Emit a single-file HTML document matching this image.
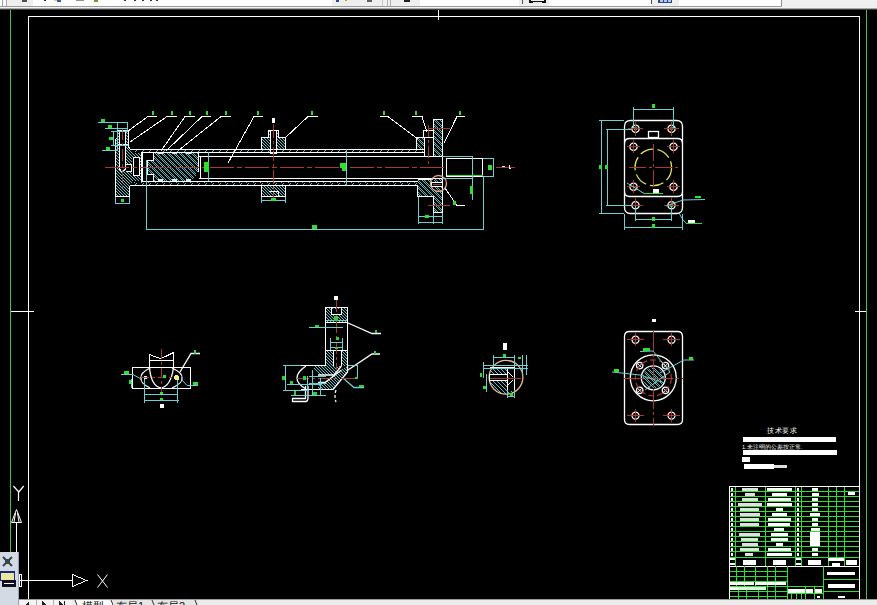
<!DOCTYPE html>
<html><head><meta charset="utf-8">
<style>
html,body{margin:0;padding:0;width:877px;height:605px;overflow:hidden;background:#000;}
svg{position:absolute;left:0;top:0;display:block;}
text{font-family:"Liberation Sans",sans-serif;}
</style></head>
<body>
<svg width="877" height="605" viewBox="0 0 877 605" shape-rendering="crispEdges">
<rect x="0" y="0" width="877" height="605" fill="#000"/>
<defs>
<pattern id="h3" width="3" height="3" patternUnits="userSpaceOnUse">
<rect x="0" y="0" width="1" height="1" fill="#58c8cc"/><rect x="1" y="1" width="1" height="1" fill="#58c8cc"/><rect x="2" y="2" width="1" height="1" fill="#58c8cc"/>
</pattern>
<pattern id="h4" width="4" height="4" patternUnits="userSpaceOnUse">
<rect x="0" y="0" width="1" height="1" fill="#58c8cc"/><rect x="1" y="1" width="1" height="1" fill="#58c8cc"/><rect x="2" y="2" width="1" height="1" fill="#58c8cc"/><rect x="3" y="3" width="1" height="1" fill="#58c8cc"/>
</pattern>
<pattern id="xh" width="6" height="6" patternUnits="userSpaceOnUse"><rect x="2" y="0" width="1" height="1" fill="#58c0c4"/><rect x="4" y="0" width="1" height="1" fill="#58c0c4"/><rect x="3" y="1" width="1" height="1" fill="#58c0c4"/><rect x="5" y="1" width="1" height="1" fill="#58c0c4"/><rect x="0" y="2" width="1" height="1" fill="#58c0c4"/><rect x="4" y="2" width="1" height="1" fill="#58c0c4"/><rect x="1" y="3" width="1" height="1" fill="#58c0c4"/><rect x="5" y="3" width="1" height="1" fill="#58c0c4"/><rect x="0" y="4" width="1" height="1" fill="#58c0c4"/><rect x="2" y="4" width="1" height="1" fill="#58c0c4"/><rect x="1" y="5" width="1" height="1" fill="#58c0c4"/><rect x="3" y="5" width="1" height="1" fill="#58c0c4"/></pattern>
<pattern id="t7" width="7" height="3" patternUnits="userSpaceOnUse" x="1" y="0">
<rect x="2" y="0" width="1" height="1" fill="#58c8cc"/><rect x="1" y="1" width="1" height="1" fill="#58c8cc"/><rect x="0" y="2" width="1" height="1" fill="#58c8cc"/>
</pattern>
</defs>

<!-- top toolbar strip -->
<g id="toolbar">
<rect x="0" y="0" width="877" height="9" fill="#efefef"/>
<rect x="0" y="0" width="2" height="6" fill="#fdfdfd"/>
<rect x="2" y="0" width="1" height="6" fill="#a0a0a0"/>
<rect x="3" y="0" width="3" height="6" fill="#f8f8f8"/>
<rect x="6" y="0" width="1" height="6" fill="#a8a8a8"/>
<rect x="33" y="0" width="299" height="6" fill="#fefefe"/>
<rect x="420" y="0" width="99" height="6" fill="#fefefe"/>
<rect x="522" y="0" width="1" height="4" fill="#505050"/>
<rect x="549" y="0" width="102" height="6" fill="#fefefe"/>
<rect x="651" y="0" width="1" height="4" fill="#505050"/>
<rect x="679" y="0" width="102" height="6" fill="#fefefe"/>
<rect x="781" y="0" width="1" height="7" fill="#909090"/>
<rect x="382" y="0" width="1" height="6" fill="#c8c8c8"/>
<rect x="387" y="0" width="1" height="6" fill="#b0b0b0"/>
<rect x="390" y="0" width="1" height="6" fill="#b0b0b0"/>
<rect x="0" y="6" width="782" height="1" fill="#9a9a9a"/>
<rect x="0" y="7" width="877" height="1" fill="#f4f4f4"/>
<rect x="0" y="8" width="877" height="1" fill="#a8a8a8"/>
<rect x="0" y="9" width="877" height="1" fill="#404040"/>
<!-- icon bits -->
<rect x="22" y="0" width="5" height="2" fill="#505050"/>
<rect x="44" y="0" width="2" height="1" fill="#202020"/>
<rect x="54" y="0" width="3" height="1" fill="#d8d060"/><rect x="57" y="0" width="4" height="2" fill="#2a60b0"/>
<rect x="76" y="0" width="8" height="1" fill="#909090"/>
<rect x="94" y="0" width="4" height="2" fill="#909020"/>
<rect x="124" y="0" width="2" height="1" fill="#303030"/><rect x="134" y="0" width="2" height="1" fill="#303030"/><rect x="142" y="0" width="2" height="1" fill="#303030"/><rect x="150" y="0" width="2" height="1" fill="#303030"/><rect x="156" y="0" width="2" height="1" fill="#303030"/>
<rect x="336" y="0" width="3" height="2" fill="#2a4a90"/><rect x="345" y="0" width="2" height="1" fill="#b0b020"/>
<rect x="367" y="0" width="5" height="2" fill="#606060"/>
<rect x="404" y="0" width="6" height="2" fill="#202020"/>
<rect x="529" y="0" width="17" height="3" fill="#101010"/><rect x="531" y="0" width="13" height="1" fill="#f0f0f0"/><rect x="533" y="2" width="9" height="1" fill="#e8e8e8"/>
<rect x="658" y="0" width="14" height="3" fill="#2a4a8a"/><rect x="660" y="0" width="3" height="2" fill="#b0c8e8"/><rect x="664" y="0" width="3" height="2" fill="#b0c8e8"/><rect x="668" y="0" width="3" height="2" fill="#b0c8e8"/>
</g>
<!-- window green lines -->
<rect x="10" y="10" width="1" height="590" fill="#4cc04c"/>
<rect x="866" y="10" width="1" height="590" fill="#4cc04c"/>
<!-- frame -->
<g fill="none" stroke="#fff" stroke-width="1">
<path d="M28.5 600 L28.5 16.5 L859.5 16.5 L859.5 600"/>
</g>
<!-- MAIN CYLINDER -->
<g id="cyl">
<!-- hatched tube walls -->
<rect x="130" y="150" width="293" height="2" fill="url(#t7)"/>
<rect x="130" y="182" width="288" height="3" fill="url(#t7)"/>
<!-- left end cap hatched -->
<path d="M116 138 L129 138 L129 150 L133 153 L143 153 L143 181 L133 181 L129 185 L129 196 L116 196 Z" fill="url(#h3)"/>
<rect x="118" y="131" width="10" height="14" fill="url(#h3)"/>
<!-- black recesses in cap -->
<rect x="120" y="131" width="5" height="38" fill="#000"/>
<path d="M120 169 L122 172 L125 169 Z" fill="#000"/>
<rect x="125" y="164" width="7" height="7" fill="#000"/>
<rect x="132" y="157" width="8" height="19" fill="#000"/>
<!-- piston crosshatch -->
<path d="M154 152 L198 152 L198 172 L192 181 L154 181 L154 175 L147 175 L147 160 L154 160 Z" fill="url(#xh)"/>
<g fill="#e8e8e8"><rect x="158" y="152" width="5" height="2"/><rect x="172" y="152" width="5" height="2"/><rect x="186" y="152" width="5" height="2"/><rect x="158" y="179" width="5" height="2"/><rect x="172" y="179" width="5" height="2"/><rect x="186" y="179" width="5" height="2"/></g>
<!-- port bosses hatched -->
<rect x="262" y="138" width="23" height="11" fill="url(#h3)"/>
<rect x="262" y="185" width="23" height="11" fill="url(#h3)"/>
<rect x="269" y="131" width="10" height="7" fill="url(#h3)"/>
<rect x="271" y="131" width="5" height="22" fill="#000"/>
<!-- right flange and gland hatched -->
<rect x="434" y="120" width="9" height="36" fill="url(#xh)"/><rect x="434" y="179" width="9" height="34" fill="url(#xh)"/>
<rect x="417" y="138" width="8" height="12" fill="url(#xh)"/>
<path d="M418 180 L442 180 L442 196 L418 196 Z" fill="url(#xh)"/>
<g fill="none" stroke="#fff" stroke-width="1">
<!-- tube lines -->
<line x1="130" y1="149.5" x2="424" y2="149.5"/>
<line x1="143" y1="152.5" x2="424" y2="152.5"/>
<line x1="199" y1="156.5" x2="442" y2="156.5"/>
<line x1="199" y1="178.5" x2="442" y2="178.5"/>
<line x1="143" y1="181.5" x2="418" y2="181.5"/>
<line x1="130" y1="185.5" x2="418" y2="185.5"/>
<!-- end cap outline -->
<path d="M115.5 138.5 L117.5 138.5 L117.5 130.5 L128.5 130.5 L128.5 145.5 L129.5 149.5 M115.5 138.5 L115.5 196.5 L129.5 196.5 L129.5 185.5"/>
<path d="M119.5 131 L119.5 169 L122 172 L125.5 169 L125.5 131"/>
<path d="M125.5 164.5 L131.5 164.5 L131.5 171.5 L125.5 171.5"/>
<path d="M133.5 157.5 L139.5 157.5 L139.5 175.5 L133.5 175.5 Z"/>
<line x1="141.5" y1="152" x2="141.5" y2="182"/>
<line x1="142.5" y1="152" x2="142.5" y2="182"/>
<line x1="117.5" y1="144.5" x2="128.5" y2="144.5"/>
<!-- piston outline -->
<path d="M153.5 152.5 L153.5 160.5 L147.5 160.5 L147.5 174.5 L153.5 174.5 L153.5 181"/>
<line x1="198.5" y1="152" x2="198.5" y2="172"/>
<line x1="200.5" y1="156" x2="200.5" y2="178"/>
<!-- port bosses -->
<path d="M261.5 149 L261.5 137.5 L268.5 137.5 L268.5 130.5 L278.5 130.5 L278.5 137.5 L285.5 137.5 L285.5 149"/>
<path d="M270.5 131 L270.5 153.5 L276.5 153.5 L276.5 131"/>
<path d="M261.5 186 L261.5 196.5 L285.5 196.5 L285.5 186"/>
<path d="M268.5 191.5 L278.5 191.5 L278.5 196"/>
<!-- right gland/flange -->
<path d="M433.5 156 L433.5 119.5 L442.5 119.5 L442.5 212.5 L433.5 212.5 L433.5 196"/>
<path d="M416.5 149 L416.5 137.5 L424.5 137.5 L424.5 156"/>
<rect x="423.5" y="130.5" width="10" height="7"/>
<path d="M417.5 186 L417.5 196.5 L433.5 196.5"/>
<line x1="418" y1="179.5" x2="433" y2="179.5"/>
<!-- rod end -->
<rect x="446.5" y="158.5" width="36" height="18"/>
<!-- leaders -->
<path d="M157 116.5 L148 116.5 L128 131"/>
<path d="M177 116.5 L167 116.5 L130 142"/>
<path d="M195 116.5 L185 116.5 L161 151"/>
<path d="M211 116.5 L202 116.5 L166 151"/>
<path d="M231 116.5 L221 116.5 L179 150"/>
<path d="M263 116.5 L254 116.5 L228 163"/>
<path d="M318 116.5 L308 116.5 L285 138"/>
<path d="M380 116.5 L388 116.5 L418 139"/>
<path d="M412 116.5 L422 116.5 L427 132"/>
<path d="M465 116.5 L457 116.5 L444 143"/>
<path d="M445 188 L457 205.5 L465 205.5"/>
<path d="M120 106 L95 126" stroke="none"/>
</g>
<!-- centre lines -->
<g stroke="#a83a30" stroke-width="1" fill="none">
<line x1="105" y1="167.5" x2="446" y2="167.5" stroke-dasharray="24 3 5 3"/><line x1="496" y1="167.5" x2="515" y2="167.5"/>
<line x1="273.5" y1="124" x2="273.5" y2="200" stroke-dasharray="14 3 3 3"/>
<line x1="122.5" y1="128" x2="122.5" y2="190" stroke-dasharray="12 3 3 3"/>
<line x1="428" y1="128.5" x2="450" y2="128.5"/>
<line x1="428" y1="205.5" x2="450" y2="205.5"/>
<line x1="428.5" y1="125" x2="428.5" y2="168" stroke-dasharray="12 3 3 3"/>
</g>
<!-- dimension lines -->
<g stroke="#6ccfd2" stroke-width="1" fill="none">
<path d="M146.5 160 L146.5 229.5 L483.5 229.5 L483.5 177"/>
<path d="M98 122.5 L128 122.5 M105 128.5 L128 128.5 M111 131.5 L128 131.5 M111 145.5 L128 145.5 M102 150.5 L117 150.5"/>
<path d="M117.5 122 L117.5 150 M127.5 122 L127.5 131 M113.5 131 L113.5 145"/>
<path d="M115.5 197 L115.5 204 M129.5 197 L129.5 204 M115 203.5 L130 203.5"/>
<path d="M208.5 152 L208.5 181"/><path d="M346.5 149 L346.5 186"/>
<path d="M262 200.5 L285 200.5 M261.5 197 L261.5 203 M285.5 197 L285.5 203"/>
<path d="M442 156.5 L473 156.5 M442 178.5 L473 178.5 M483 158.5 L493.5 158.5 L493.5 176.5 L483 176.5"/>
<path d="M472.5 156 L472.5 200"/>
<path d="M418.5 197 L418.5 224 M433.5 213 L433.5 224 M442.5 213 L442.5 224 M418 216.5 L443 216.5 M418 222.5 L443 222.5"/>
<path d="M456 117 L456 117"/>
</g>
<!-- green bits -->
<g fill="#30e030">
<rect x="204" y="162" width="5" height="10"/>
<rect x="101" y="119" width="4" height="3"/>
<rect x="108" y="125" width="4" height="3"/>
<rect x="109" y="137" width="4" height="3"/>
<rect x="106" y="147" width="4" height="3"/>
<rect x="121" y="199" width="3" height="3"/>
<rect x="152" y="111" width="2" height="4"/>
<rect x="171" y="111" width="2" height="4"/>
<rect x="189" y="111" width="2" height="4"/>
<rect x="206" y="111" width="2" height="4"/>
<rect x="225" y="111" width="2" height="4"/>
<rect x="257" y="111" width="2" height="4"/>
<rect x="311" y="111" width="2" height="4"/>
<rect x="383" y="111" width="2" height="4"/>
<rect x="415" y="111" width="2" height="4"/>
<rect x="459" y="111" width="2" height="4"/>
<rect x="340" y="163" width="6" height="5"/><rect x="342" y="168" width="4" height="3"/>
<rect x="488" y="165" width="4" height="5"/><rect x="312" y="225" width="5" height="4"/>
<rect x="470" y="186" width="3" height="8"/>
<rect x="271" y="198" width="5" height="3"/>
<rect x="425" y="215" width="4" height="3"/>
<rect x="453" y="201" width="3" height="4"/>
<rect x="447" y="175" width="36" height="1"/></g><g fill="#fff"><rect x="502" y="166" width="3" height="1"/><rect x="509" y="165" width="1" height="4"/><rect x="509" y="168" width="2" height="1"/>
</g>
<rect x="272" y="118" width="3" height="5" fill="#fff"/>
<rect x="431" y="182" width="12" height="5" fill="#000"/><rect x="431.5" y="182.5" width="11" height="4" fill="none" stroke="#fff" stroke-width="1"/><line x1="433" y1="184.5" x2="441" y2="184.5" stroke="#a83a30"/>
<ellipse cx="438.5" cy="183.5" rx="8" ry="8" fill="none" stroke="#e0a888" stroke-width="1.3" shape-rendering="auto"/>
</g>
<!-- END VIEW top right -->
<g id="endview">
<g fill="none" stroke="#fff" stroke-width="1.3" shape-rendering="auto">
<path d="M630.5 120.5 L676.5 120.5 Q682.5 120.5 682.5 126.5 L682.5 207.5 Q682.5 213.5 676.5 213.5 L630.5 213.5 Q624.5 213.5 624.5 207.5 L624.5 126.5 Q624.5 120.5 630.5 120.5 Z"/>
<path d="M624.5 143.5 Q624.5 138.5 629.5 138.5 L677.5 138.5 Q682.5 138.5 682.5 143.5"/>
<path d="M624.5 191.5 Q624.5 196.5 629.5 196.5 L677.5 196.5 Q682.5 196.5 682.5 191.5"/>
<rect x="648.5" y="131.5" width="10" height="6"/>
<circle cx="635.5" cy="128.8" r="3.6"/>
<circle cx="671.5" cy="128.8" r="3.6"/>
<circle cx="633.5" cy="146.8" r="3.6"/>
<circle cx="673.5" cy="146.8" r="3.6"/>
<circle cx="633.5" cy="186.8" r="3.6"/>
<circle cx="673.5" cy="186.8" r="3.6"/>
<circle cx="635.5" cy="205.2" r="3.6"/>
<circle cx="671.5" cy="205.2" r="3.6"/>
</g>
<g fill="#30c030"><circle cx="635.5" cy="128.8" r="1.8"/><circle cx="671.5" cy="128.8" r="1.8"/><circle cx="671.5" cy="205.2" r="1.8"/></g>
<circle cx="653.3" cy="167.4" r="18.3" fill="none" stroke="#e0e060" stroke-width="1.3" stroke-dasharray="14 4" shape-rendering="auto"/>
<g stroke="#a83a30" stroke-width="1" fill="none">
<line x1="629" y1="167.5" x2="678" y2="167.5" stroke-dasharray="17 3 3 3"/>
<line x1="653.5" y1="144" x2="653.5" y2="191" stroke-dasharray="17 3 3 3"/>
<path d="M628 128.5 L643 128.5 M635.5 122 L635.5 136 M664 128.5 L679 128.5 M671.5 122 L671.5 136"/>
<path d="M627 146.5 L640 146.5 M633.5 140 L633.5 153 M667 146.5 L680 146.5 M673.5 140 L673.5 153"/>
<path d="M627 186.5 L640 186.5 M633.5 180 L633.5 193 M667 186.5 L680 186.5 M673.5 180 L673.5 193"/>
<path d="M628 205.5 L643 205.5 M635.5 198 L635.5 212 M664 205.5 L679 205.5 M671.5 198 L671.5 212"/>
</g>
<g stroke="#6ccfd2" stroke-width="1" fill="none">
<path d="M633.5 107 L633.5 128 M673.5 107 L673.5 128 M633 109.5 L674 109.5"/>
<path d="M599 120.5 L624 120.5 M606 129.5 L632 129.5 M606 205.5 L632 205.5 M599 213.5 L624 213.5"/>
<path d="M601.5 120 L601.5 213 M607.5 129 L607.5 206"/>
<path d="M635.5 206 L635.5 221 M671.5 206 L671.5 221 M635 219.5 L672 219.5"/>
<path d="M624.5 214 L624.5 230 M682.5 214 L682.5 230 M624 227.5 L683 227.5"/>
<path d="M627 183 L645 194" shape-rendering="auto"/>
<path d="M666 206 L683 200 L705 199.5" shape-rendering="auto"/>
<path d="M679 213 L683 220 L686 223" shape-rendering="auto"/>
</g>
<g fill="#30e030">
<rect x="652" y="104" width="3" height="4"/><rect x="599" y="165" width="3" height="4"/><rect x="605" y="165" width="3" height="4"/>
<rect x="652" y="217" width="3" height="4"/><rect x="652" y="224" width="3" height="4"/><rect x="645" y="193" width="18" height="1"/>
<rect x="695" y="196" width="6" height="2"/><rect x="686" y="223" width="16" height="1"/>
</g>
<rect x="653" y="189" width="6" height="4" fill="#fff"/>
<rect x="688" y="220" width="7" height="3" fill="#fff"/>
</g>
<!-- MIDDLE ROW -->
<g id="obj1">
<g fill="none" stroke="#fff" stroke-width="1">
<rect x="132.5" y="367.5" width="58" height="21"/>
<path d="M149.5 367 L149.5 354.5 Q155 357 161 358.5 Q167 356 173.5 352.5 L173.5 367"/>
<line x1="149" y1="360.5" x2="174" y2="360.5"/>
</g>
<g fill="none" stroke="#fff" stroke-width="1.3" shape-rendering="auto">
<path d="M149.5 367.5 Q151 386 161 388 Q171 386 173.5 367.5"/>
<path d="M150 368 Q140 373 141 378 Q140 383 150 388"/>
<path d="M172 368 Q183 373 182 378 Q183 383 172 388"/>
<path d="M180 372 L191 353.5 L200 353.5"/>
</g>
<circle cx="145.7" cy="377.6" r="1.6" fill="#fff"/>
<circle cx="176.7" cy="377.6" r="2.6" fill="#f0f080"/>
<g stroke="#a83a30" stroke-width="1" fill="none">
<line x1="161.5" y1="349" x2="161.5" y2="396" stroke-dasharray="10 3 3 3"/>
<line x1="141" y1="377.5" x2="173" y2="377.5" stroke-dasharray="8 3 3 3"/>
</g>
<g stroke="#6ccfd2" stroke-width="1" fill="none">
<path d="M144.5 379 L144.5 403 M177.5 380 L177.5 403 M145 394.5 L178 394.5 M144 400.5 L179 400.5"/>
<path d="M121 374.5 L133 374.5 L141 379 M131.5 379 L131.5 388 M182 380 L187 385.5 L198 385.5" shape-rendering="auto"/>
</g>
<g fill="#30e030"><rect x="124" y="371" width="5" height="3"/><rect x="129" y="380" width="2" height="4"/><rect x="194" y="350" width="2" height="4"/><rect x="193" y="382" width="5" height="3"/><rect x="163" y="375" width="3" height="3"/><rect x="160" y="392" width="3" height="2"/><rect x="160" y="398" width="3" height="2"/></g>
<rect x="160" y="404" width="4" height="4" fill="#fff"/>
</g>
<g id="obj2">
<path d="M326 308 L347 308 L347 322 L326 322 Z" fill="url(#h3)"/>
<rect x="332" y="309" width="9" height="5" fill="#000"/>
<!-- vertical walls -->
<rect x="326" y="351" width="8" height="15" fill="url(#h3)"/>
<rect x="341" y="351" width="6" height="15" fill="url(#h3)"/>
<!-- upper band of bend -->
<path d="M313 366 L341 366 L334 375 L318 375 Z" fill="url(#h3)"/>
<!-- lower diagonal band -->
<path d="M347 366 L347 372 L333 389 L318 389 L318 382 L325 382 Z" fill="url(#h3)"/>
<g fill="none" stroke="#fff" stroke-width="1">
<path d="M325.5 366 L325.5 307.5 L347.5 307.5 L347.5 366"/>
<line x1="326" y1="322.5" x2="347" y2="322.5"/>
<line x1="326" y1="350.5" x2="347" y2="350.5"/>
<path d="M301 365.5 L326 365.5"/>
<line x1="301" y1="389.5" x2="333" y2="389.5"/>
<path d="M331.5 308 L331.5 314.5 L341.5 314.5 L341.5 308"/>
<path d="M333.5 351 L333.5 366 M341.5 351 L341.5 366"/>

</g>
<g fill="none" stroke="#fff" stroke-width="1.3" shape-rendering="auto">
<path d="M347.5 366 L347.5 372 L333 389.5"/>
<path d="M341.5 366 L334 375 L318 375"/>
<path d="M341.5 370 L325 382.5 L318 382.5"/>
<path d="M348 323 L372 333.5 L381 333.5"/>
<path d="M348 370 L372 354 L380 354"/>
<path d="M343 378 L354 387.5 L364 387.5" stroke="#6ccfd2"/>
<path d="M306 366 Q297 372 297 378 Q297 384 306 389"/>
<path d="M305.5 386 L305.5 398.5 L292.5 398.5 L292.5 401.5 L306 401.5 Q308 401 308 398 L308 386"/>
<path d="M336 390 Q334 396 336 402" stroke-dasharray="3 2"/>
</g>
<g stroke="#a83a30" stroke-width="1" fill="none">
<line x1="336.5" y1="300" x2="336.5" y2="370" stroke-dasharray="12 3 3 3"/>
<line x1="297" y1="378.5" x2="336" y2="378.5" stroke-dasharray="12 3 3 3"/>
<line x1="341" y1="378.5" x2="356" y2="378.5"/>
</g>
<g stroke="#6ccfd2" stroke-width="1" fill="none">
<path d="M326 320.5 L347 320.5 M309 327.5 L343 327.5 M330 342.5 L343 342.5 M330 347.5 L343 347.5 M330.5 338 L330.5 350 M342.5 338 L342.5 350"/>
<path d="M283 365.5 L301 365.5 M283 390.5 L307 390.5 M285.5 365 L285.5 390 M348 365.5 L358 365.5 M357.5 365 L357.5 378"/>
<path d="M287 384.5 L320 384.5 M291 395.5 L326 395.5 M312.5 370 L312.5 396 M320.5 378 L320.5 396 M307.5 376 L307.5 390"/>
<path d="M309 376 L326 376 M309 383 L326 383"/>
</g>
<g fill="#30d030"><rect x="315" y="325" width="4" height="2"/><rect x="375" y="330" width="2" height="3"/><rect x="374" y="351" width="2" height="3"/><rect x="282" y="376" width="3" height="4"/><rect x="303" y="376" width="3" height="4"/><rect x="359" y="385" width="5" height="2"/><rect x="294" y="391" width="2" height="4"/><rect x="290" y="381" width="3" height="3"/><rect x="313" y="392" width="4" height="3"/><rect x="335" y="347" width="3" height="2"/><rect x="334" y="316" width="4" height="5"/><rect x="355" y="377" width="3" height="2"/><rect x="336" y="337" width="3" height="3"/></g>
<rect x="334" y="296" width="4" height="4" fill="#fff"/>
</g>
<g id="obj3">
<defs><clipPath id="c3"><circle cx="506" cy="377.3" r="16.9"/></clipPath></defs>
<g clip-path="url(#c3)">
<rect x="488" y="368" width="26" height="27" fill="url(#h4)"/>
<rect x="489" y="374" width="19" height="7" fill="#000"/>
<rect x="507" y="368" width="7" height="23" fill="#000"/><path d="M507.5 368 L507.5 391 M508 372 L513 377 M508 385 L513 380" stroke="#fff" fill="none"/>
</g>
<circle cx="506" cy="377.3" r="16.9" fill="none" stroke="#e8b898" stroke-width="1.3" shape-rendering="auto"/>
<g fill="none" stroke="#fff" stroke-width="1">
<line x1="490" y1="367.5" x2="515" y2="367.5"/>
<line x1="514.5" y1="362" x2="514.5" y2="393"/>
<rect x="489.5" y="374.5" width="18" height="6"/>
</g>
<line x1="490" y1="378.5" x2="521" y2="378.5" stroke="#a83a30"/>
<g stroke="#6ccfd2" stroke-width="1" fill="none">
<path d="M493 357.5 L514 357.5 M493.5 355 L493.5 367 M514.5 355 L514.5 367"/>
<path d="M483 365.5 L528 365.5 M483 368.5 L528 368.5 M483.5 362 L483.5 378 M522.5 355 L522.5 375 M526.5 355 L526.5 375"/>
<path d="M486.5 374 L486.5 392 M507 396.5 L514 396.5 M507.5 390 L507.5 398 M514.5 390 L514.5 398"/>
</g>
<g fill="#30e030"><rect x="503" y="354" width="3" height="3"/><rect x="480" y="373" width="2" height="4"/><rect x="483" y="386" width="3" height="3"/><rect x="510" y="393" width="3" height="3"/><rect x="518" y="357" width="3" height="2"/></g>
<rect x="503" y="343" width="4" height="7" fill="#fff"/>
</g>
<g id="obj4">
<g fill="none" stroke="#fff" stroke-width="1.3" shape-rendering="auto">
<path d="M629.5 331.5 L677.5 331.5 Q682.5 331.5 682.5 336.5 L682.5 419.5 Q682.5 424.5 677.5 424.5 L629.5 424.5 Q624.5 424.5 624.5 419.5 L624.5 336.5 Q624.5 331.5 629.5 331.5 Z"/>
<circle cx="635.5" cy="339.7" r="3.5"/><circle cx="671.5" cy="339.7" r="3.5"/><circle cx="635.5" cy="415.6" r="3.5"/><circle cx="671.5" cy="415.6" r="3.5"/>
<circle cx="653.3" cy="377.8" r="23"/>
<circle cx="653.3" cy="377.8" r="12"/>
<circle cx="639.7" cy="365.6" r="3.2"/><circle cx="665.5" cy="365.6" r="3.2"/><circle cx="639.7" cy="390.3" r="3.2"/><circle cx="665.5" cy="390.3" r="3.2"/><path d="M638 364 L641.5 367.5 M641.5 364 L638 367.5 M663.8 364 L667.2 367.5 M667.2 364 L663.8 367.5 M638 388.6 L641.5 392 M641.5 388.6 L638 392 M663.8 388.6 L667.2 392 M667.2 388.6 L663.8 392" stroke-width="1"/>
</g>
<defs><clipPath id="c4"><circle cx="653.3" cy="377.8" r="10.5"/></clipPath></defs>
<rect x="642" y="367" width="23" height="23" fill="url(#xh)" clip-path="url(#c4)"/>
<circle cx="653.3" cy="377.8" r="18" fill="none" stroke="#a83a30" stroke-width="1.2" stroke-dasharray="6 3" shape-rendering="auto"/>
<g stroke="#a83a30" stroke-width="1" fill="none">
<line x1="653.5" y1="331" x2="653.5" y2="425" stroke-dasharray="20 3 3 3"/>
<line x1="624" y1="378.5" x2="683" y2="378.5" stroke-dasharray="20 3 3 3"/>
<path d="M627 339.5 L644 339.5 M663 339.5 L680 339.5 M627 415.5 L644 415.5 M663 415.5 L680 415.5 M635.5 333 L635.5 346 M671.5 333 L671.5 346 M635.5 409 L635.5 422 M671.5 409 L671.5 422"/>
</g>
<g stroke="#6ccfd2" stroke-width="1" fill="none" shape-rendering="auto">
<path d="M612 372 L640 375 L665 383"/>
<path d="M640 351.5 L653 351 L670 372 L645 390"/>
<path d="M694 360 L684 360 L660 373"/>
</g>
<g fill="#30e030"><rect x="614" y="369" width="5" height="3"/><rect x="643" y="348" width="7" height="3"/><rect x="689" y="357" width="4" height="3"/></g>
<rect x="652" y="319" width="4" height="3" fill="#fff"/>
</g>
<!-- TECH REQUIREMENTS TEXT -->
<g id="tech">
<text x="767" y="433" font-size="6.5" fill="#fff" letter-spacing="0.6">技术要求</text>
<rect x="743" y="437" width="93" height="5" fill="#fff"/>
<text x="742" y="448.5" font-size="5.5" fill="#fff">1.未注明的公差按正常.</text>
<rect x="743" y="450" width="94" height="5" fill="#fff"/>
<rect x="742" y="457" width="8" height="5" fill="#fff"/>
<rect x="744" y="464" width="30" height="5" fill="#fff"/>
<rect x="774" y="465" width="13" height="3" fill="#ddd"/>
</g>
<!-- TITLE BLOCK -->
<g id="titleblock">
<rect x="730" y="491" width="129" height="1" fill="#30e030"/>
<rect x="730" y="496" width="129" height="1" fill="#30e030"/>
<rect x="730" y="501" width="129" height="1" fill="#30e030"/>
<rect x="730" y="506" width="129" height="1" fill="#30e030"/>
<rect x="730" y="511" width="129" height="1" fill="#30e030"/>
<rect x="730" y="516" width="129" height="1" fill="#30e030"/>
<rect x="730" y="521" width="129" height="1" fill="#30e030"/>
<rect x="730" y="526" width="129" height="1" fill="#30e030"/>
<rect x="730" y="531" width="129" height="1" fill="#30e030"/>
<rect x="730" y="536" width="129" height="1" fill="#30e030"/>
<rect x="730" y="541" width="129" height="1" fill="#30e030"/>
<rect x="730" y="546" width="129" height="1" fill="#30e030"/>
<rect x="730" y="551" width="129" height="1" fill="#30e030"/>
<rect x="735" y="487" width="1" height="70" fill="#30e030"/>
<rect x="765" y="487" width="1" height="70" fill="#30e030"/>
<rect x="795" y="487" width="1" height="70" fill="#30e030"/>
<rect x="801" y="487" width="1" height="70" fill="#30e030"/>
<rect x="828" y="487" width="1" height="70" fill="#30e030"/>
<rect x="836" y="487" width="1" height="70" fill="#30e030"/>
<rect x="844" y="487" width="1" height="70" fill="#30e030"/>
<rect x="729" y="486" width="131" height="1" fill="#fff"/>
<rect x="729" y="486" width="1" height="113" fill="#fff"/>
<rect x="730" y="557" width="129" height="1" fill="#30e030"/>
<rect x="730" y="566" width="129" height="1" fill="#fff"/>
<rect x="735" y="557" width="1" height="9" fill="#30e030"/>
<rect x="765" y="557" width="1" height="9" fill="#30e030"/>
<rect x="795" y="557" width="1" height="9" fill="#30e030"/>
<rect x="801" y="557" width="1" height="9" fill="#30e030"/>
<rect x="828" y="557" width="1" height="9" fill="#30e030"/>
<rect x="844" y="557" width="1" height="9" fill="#30e030"/>
<rect x="742" y="488" width="16" height="3" fill="#e0e0e0"/>
<rect x="767" y="488" width="25" height="3" fill="#fff"/>
<rect x="812" y="488" width="6" height="3" fill="#fff"/>
<rect x="731" y="488" width="2" height="3" fill="#fff"/>
<rect x="797" y="488" width="2" height="3" fill="#fff"/>
<rect x="745" y="493" width="10" height="3" fill="#e0e0e0"/>
<rect x="772" y="493" width="15" height="3" fill="#fff"/>
<rect x="812" y="493" width="7" height="3" fill="#fff"/>
<rect x="731" y="493" width="2" height="3" fill="#fff"/>
<rect x="797" y="493" width="2" height="3" fill="#fff"/>
<rect x="742" y="498" width="16" height="3" fill="#e0e0e0"/>
<rect x="768" y="498" width="23" height="3" fill="#fff"/>
<rect x="812" y="498" width="6" height="3" fill="#fff"/>
<rect x="731" y="498" width="2" height="3" fill="#fff"/>
<rect x="797" y="498" width="2" height="3" fill="#fff"/>
<rect x="738" y="503" width="24" height="3" fill="#e0e0e0"/>
<rect x="767" y="503" width="25" height="3" fill="#fff"/>
<rect x="812" y="503" width="6" height="3" fill="#fff"/>
<rect x="731" y="503" width="2" height="3" fill="#fff"/>
<rect x="797" y="503" width="2" height="3" fill="#fff"/>
<rect x="740" y="508" width="19" height="3" fill="#e0e0e0"/>
<rect x="776" y="508" width="7" height="3" fill="#fff"/>
<rect x="812" y="508" width="6" height="3" fill="#fff"/>
<rect x="731" y="508" width="2" height="3" fill="#fff"/>
<rect x="797" y="508" width="2" height="3" fill="#fff"/>
<rect x="740" y="513" width="20" height="3" fill="#e0e0e0"/>
<rect x="772" y="513" width="15" height="3" fill="#fff"/>
<rect x="810" y="513" width="10" height="3" fill="#fff"/>
<rect x="731" y="513" width="2" height="3" fill="#fff"/>
<rect x="797" y="513" width="2" height="3" fill="#fff"/>
<rect x="740" y="518" width="19" height="3" fill="#e0e0e0"/>
<rect x="768" y="518" width="23" height="3" fill="#fff"/>
<rect x="812" y="518" width="6" height="3" fill="#fff"/>
<rect x="731" y="518" width="2" height="3" fill="#fff"/>
<rect x="797" y="518" width="2" height="3" fill="#fff"/>
<rect x="740" y="523" width="19" height="3" fill="#e0e0e0"/>
<rect x="768" y="523" width="22" height="3" fill="#fff"/>
<rect x="812" y="523" width="6" height="3" fill="#fff"/>
<rect x="731" y="523" width="2" height="3" fill="#fff"/>
<rect x="797" y="523" width="2" height="3" fill="#fff"/>
<rect x="774" y="528" width="10" height="3" fill="#fff"/>
<rect x="811" y="528" width="9" height="3" fill="#fff"/>
<rect x="731" y="528" width="2" height="3" fill="#fff"/>
<rect x="797" y="528" width="2" height="3" fill="#fff"/>
<rect x="739" y="533" width="21" height="3" fill="#e0e0e0"/>
<rect x="771" y="533" width="17" height="3" fill="#fff"/>
<rect x="810" y="533" width="10" height="3" fill="#fff"/>
<rect x="731" y="533" width="2" height="3" fill="#fff"/>
<rect x="797" y="533" width="2" height="3" fill="#fff"/>
<rect x="741" y="538" width="17" height="3" fill="#e0e0e0"/>
<rect x="771" y="538" width="17" height="3" fill="#fff"/>
<rect x="810" y="538" width="10" height="3" fill="#fff"/>
<rect x="731" y="538" width="2" height="3" fill="#fff"/>
<rect x="797" y="538" width="2" height="3" fill="#fff"/>
<rect x="742" y="543" width="16" height="3" fill="#e0e0e0"/>
<rect x="776" y="543" width="7" height="3" fill="#fff"/>
<rect x="810" y="543" width="10" height="3" fill="#fff"/>
<rect x="731" y="543" width="2" height="3" fill="#fff"/>
<rect x="797" y="543" width="2" height="3" fill="#fff"/>
<rect x="740" y="548" width="19" height="3" fill="#e0e0e0"/>
<rect x="768" y="548" width="23" height="3" fill="#fff"/>
<rect x="812" y="548" width="6" height="3" fill="#fff"/>
<rect x="731" y="548" width="2" height="3" fill="#fff"/>
<rect x="797" y="548" width="2" height="3" fill="#fff"/>
<rect x="745" y="553" width="8" height="3" fill="#e0e0e0"/>
<rect x="767" y="553" width="25" height="3" fill="#fff"/>
<rect x="812" y="553" width="6" height="3" fill="#fff"/>
<rect x="731" y="553" width="2" height="3" fill="#fff"/>
<rect x="797" y="553" width="2" height="3" fill="#fff"/>
<rect x="810" y="532" width="10" height="14" fill="#fff"/>
<rect x="848" y="492" width="7" height="3" fill="#fff"/>
<rect x="743" y="560" width="13" height="5" fill="#fff"/>
<rect x="773" y="560" width="13" height="5" fill="#fff"/>
<rect x="808" y="560" width="13" height="5" fill="#fff"/>
<rect x="846" y="560" width="11" height="5" fill="#fff"/>
<rect x="828" y="558" width="16" height="3" fill="#fff"/>
<rect x="832" y="563" width="8" height="3" fill="#fff"/>
<rect x="796" y="558" width="5" height="2" fill="#fff"/>
<rect x="796" y="563" width="5" height="2" fill="#fff"/>
<rect x="730" y="558" width="5" height="2" fill="#fff"/>
<rect x="730" y="563" width="5" height="2" fill="#fff"/>
<rect x="730" y="571" width="57" height="1" fill="#30e030"/>
<rect x="730" y="576" width="57" height="1" fill="#30e030"/>
<rect x="730" y="581" width="57" height="1" fill="#30e030"/>
<rect x="730" y="586" width="57" height="1" fill="#30e030"/>
<rect x="730" y="591" width="57" height="1" fill="#30e030"/>
<rect x="730" y="596" width="57" height="1" fill="#30e030"/>
<rect x="736" y="566" width="1" height="20" fill="#30e030"/>
<rect x="744" y="566" width="1" height="20" fill="#30e030"/>
<rect x="755" y="566" width="1" height="20" fill="#30e030"/>
<rect x="767" y="566" width="1" height="20" fill="#30e030"/>
<rect x="775" y="566" width="1" height="20" fill="#30e030"/>
<rect x="738" y="586" width="1" height="13" fill="#30e030"/>
<rect x="746" y="586" width="1" height="13" fill="#30e030"/>
<rect x="758" y="586" width="1" height="13" fill="#30e030"/>
<rect x="767" y="586" width="1" height="13" fill="#30e030"/>
<rect x="775" y="586" width="1" height="13" fill="#30e030"/>
<rect x="787" y="566" width="1" height="33" fill="#30e030"/>
<rect x="823" y="566" width="1" height="33" fill="#30e030"/>
<rect x="787" y="586" width="36" height="1" fill="#30e030"/>
<rect x="787" y="593" width="36" height="1" fill="#30e030"/>
<rect x="791" y="593" width="1" height="6" fill="#30e030"/>
<rect x="796" y="593" width="1" height="6" fill="#30e030"/>
<rect x="801" y="593" width="1" height="6" fill="#30e030"/>
<rect x="805" y="586" width="1" height="13" fill="#30e030"/>
<rect x="814" y="586" width="1" height="13" fill="#30e030"/>
<rect x="823" y="579" width="36" height="1" fill="#30e030"/>
<rect x="823" y="591" width="36" height="1" fill="#30e030"/>
<rect x="827" y="572" width="28" height="3" fill="#fff"/>
<rect x="828" y="584" width="27" height="4" fill="#fff"/>
<rect x="730" y="582" width="24" height="3" fill="#f0fff0"/>
<rect x="755" y="582" width="31" height="3" fill="#f0fff0"/>
<rect x="730" y="587" width="8" height="3" fill="#fff"/>
<rect x="738" y="587" width="28" height="3" fill="#e0ffe0"/>
<rect x="788" y="589" width="17" height="4" fill="#fff"/>
<rect x="806" y="589" width="7" height="4" fill="#fff"/>
<rect x="815" y="589" width="7" height="4" fill="#fff"/>
<rect x="817" y="596" width="3" height="2" fill="#fff"/>
<rect x="838" y="596" width="7" height="2" fill="#fff"/>

</g>
<!-- frame ticks -->
<rect x="11" y="311" width="23" height="1" fill="#fff"/>
<rect x="855" y="311" width="11" height="1" fill="#fff"/>
<rect x="438" y="10" width="1" height="10" fill="#fff"/>
<!-- UCS icon -->
<g fill="none" stroke="#fff" stroke-width="1">
<line x1="16.5" y1="523" x2="16.5" y2="598"/>
<line x1="20" y1="580.5" x2="72" y2="580.5"/>
<path d="M72.5 574.5 L86.5 580.5 L72.5 586.5 Z"/>
<path d="M11.5 522.5 L16.5 509.5 L21.5 522.5 Z M15.5 513 L14 522 M17.5 513 L19 522" shape-rendering="auto"/>
<path d="M97.5 574.5 L107.5 587.5 M107.5 574.5 L97.5 587.5" shape-rendering="auto"/>
<path d="M13.4 486 L18.8 492 L23.7 486 M18.5 492 L18.5 501" shape-rendering="auto" stroke-width="1.2"/>
<rect x="19.5" y="574.5" width="2" height="12"/>
</g>
<!-- bottom tab bar -->
<g id="tabs">
<rect x="0" y="599" width="877" height="6" fill="#ececec"/>
<rect x="0" y="599" width="877" height="1" fill="#9a9a9a"/>
<rect x="20" y="600" width="52" height="5" fill="#f4f4f4"/>
<rect x="36" y="600" width="1" height="5" fill="#b0b0b0"/><rect x="53" y="600" width="1" height="5" fill="#b0b0b0"/>
<path d="M29 601 L25 605 L29 605 Z M42 601 L46 605 L42 605 Z M59 601 L63 605 L59 605 Z" fill="#202020"/>
<rect x="64" y="601" width="1" height="4" fill="#202020"/>
<rect x="76" y="600" width="36" height="5" fill="#ffffff"/>
<path d="M75 600 L77 605" stroke="#303030" stroke-width="1" shape-rendering="auto"/>
<path d="M111 600 L113 605" stroke="#303030" stroke-width="1" shape-rendering="auto"/>
<text x="82" y="610" font-size="11" fill="#000">模型</text>
<rect x="113" y="600" width="86" height="5" fill="#e6e6e6"/>
<text x="116" y="610" font-size="11" fill="#111">布局1</text>
<path d="M152 600 L154 605" stroke="#303030" stroke-width="1" shape-rendering="auto"/>
<text x="157" y="610" font-size="11" fill="#111">布局2</text>
<path d="M195 600 L197 605" stroke="#303030" stroke-width="1" shape-rendering="auto"/>
</g>
<!-- left mini toolbar -->
<g id="minitb">
<rect x="0" y="552" width="19" height="53" fill="#d3dae3"/>
<rect x="18" y="552" width="1" height="53" fill="#9aa3ad"/>
<path d="M3 557 L12 566 M12 557 L3 566" stroke="#3a4550" stroke-width="2" shape-rendering="auto"/>
<rect x="5" y="559" width="5" height="5" fill="#3a4550"/>
<rect x="0" y="571" width="15" height="10" fill="#1a2a80"/>
<rect x="1" y="573" width="13" height="7" fill="#e8e8a0"/>
<rect x="2" y="580" width="14" height="7" fill="#101020"/>
<rect x="4" y="583" width="10" height="1" fill="#fff"/>
</g>
</svg>
</body></html>
